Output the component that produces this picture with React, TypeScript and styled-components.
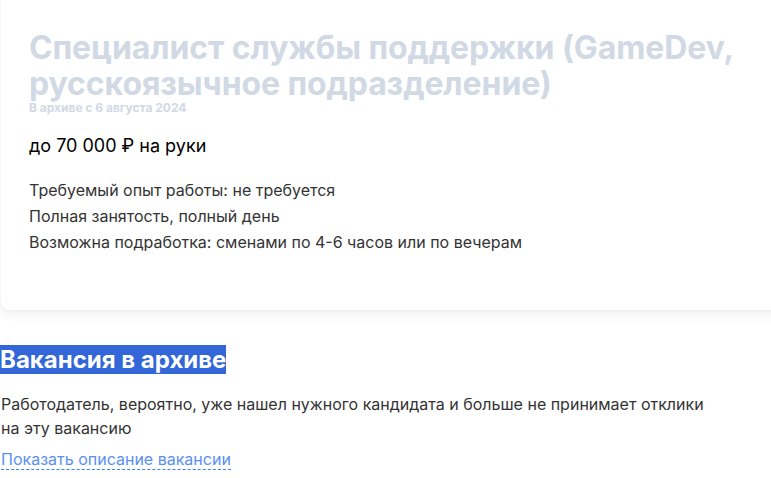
import React from "react";
import styled, { createGlobalStyle } from "styled-components";

const Global = createGlobalStyle`
  html, body { margin: 0; padding: 0; background: #fff; }
  body { font-family: Inter, "Noto Sans", sans-serif; color: #333; }
`;

const Page = styled.div`
  padding: 0 0 0 1px;
  width: 771px;
  box-sizing: border-box;
  overflow: hidden;
`;

const Card = styled.section`
  background: #fff;
  border-radius: 0 0 8px 8px;
  box-shadow: 0 4px 12px rgba(0, 0, 0, 0.07), 0 0 1px rgba(0, 0, 0, 0.08);
  padding: 30px 28px 56px 28px;
  width: 800px;
  box-sizing: border-box;
`;

const Title = styled.h1`
  margin: 0;
  font-size: 32px;
  line-height: 36px;
  font-weight: 700;
  color: #d1d9e4;
  letter-spacing: -0.1px;
`;

const ArchiveDate = styled.div`
  margin-top: -1px;
  font-size: 12px;
  line-height: 14px;
  font-weight: 700;
  color: #d1d9e4;
`;

const Salary = styled.div`
  margin-top: 19px;
  font-size: 18px;
  line-height: 24px;
  color: #000;
`;

const Facts = styled.ul`
  list-style: none;
  margin: 20px 0 0;
  padding: 0;
  display: flex;
  flex-direction: column;
  gap: 2px;
`;

const Fact = styled.li`
  font-size: 16px;
  line-height: 24px;
  color: #333;
`;

const Archive = styled.section`
  padding-top: 36px;
  margin-left: -1px;
`;

const ArchiveTitle = styled.h2`
  margin: 0;
  font-size: 24px;
  line-height: 28px;
  font-weight: 700;
  color: #fff;
  span {
    background: #3366d6;
  }
`;

const Note = styled.p`
  margin: 18px 0 0 1px;
  font-size: 16px;
  line-height: 24px;
  color: #333;
  max-width: 720px;
`;

const ShowLink = styled.a`
  display: inline-block;
  margin: 9px 0 0 1px;
  font-size: 16px;
  line-height: 20px;
  color: #5a8ff4;
  text-decoration: none;
  border-bottom: 1px dashed #3a82f0;
  cursor: pointer;
`;

export default function App() {
  return (
    <Page>
      <Global />
      <Card>
        <Title>Специалист службы поддержки (GameDev, русскоязычное подразделение)</Title>
        <ArchiveDate>В архиве с 6 августа 2024</ArchiveDate>
        <Salary>до 70 000 ₽ на руки</Salary>
        <Facts>
          <Fact>Требуемый опыт работы: не требуется</Fact>
          <Fact>Полная занятость, полный день</Fact>
          <Fact>Возможна подработка: сменами по 4-6 часов или по вечерам</Fact>
        </Facts>
      </Card>
      <Archive>
        <ArchiveTitle><span>Вакансия в архиве</span></ArchiveTitle>
        <Note>Работодатель, вероятно, уже нашел нужного кандидата и больше не принимает отклики на эту вакансию</Note>
        <ShowLink>Показать описание вакансии</ShowLink>
      </Archive>
    </Page>
  );
}
